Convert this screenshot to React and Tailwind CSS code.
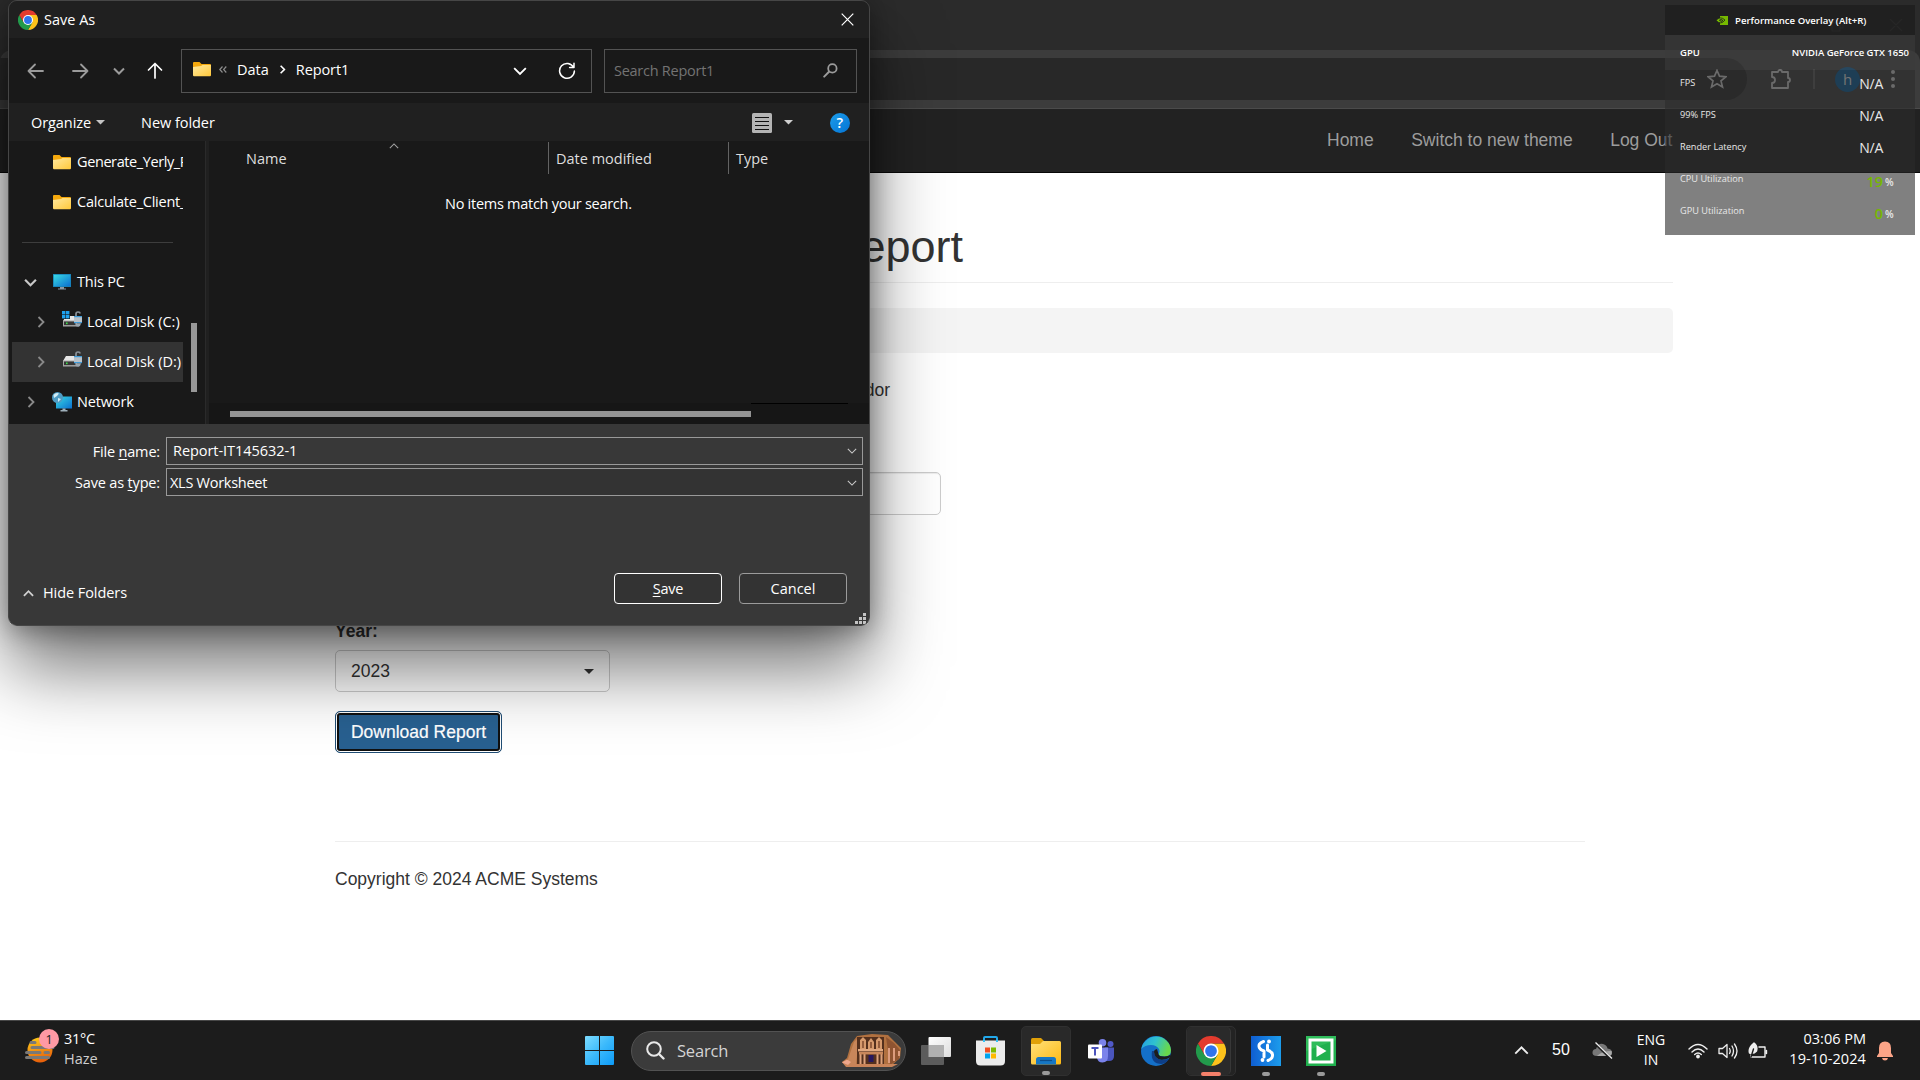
import React from 'react';

const stroke = { fill: 'none', strokeLinecap: 'round', strokeLinejoin: 'round' };

function ChromeLogo({ className }) {
  return (
    <svg viewBox="0 0 48 48" className={className}>
      <path d="M24 12 H44.8 A24 24 0 0 1 24 48 L34.4 30 Z" fill="#fcc21b" />
      <path d="M13.6 30 L3.2 12 A24 24 0 0 0 24 48 L34.4 30 Z" fill="#229a4b" />
      <path d="M24 12 H44.8 A24 24 0 0 0 3.2 12 L13.6 30 Z" fill="#e33b2e" />
      <circle cx="24" cy="24" r="12" fill="#fff" />
      <circle cx="24" cy="24" r="9.4" fill="#2f74ec" />
    </svg>
  );
}

function Folder() {
  return (
    <svg viewBox="0 0 18 15" className="h-[15px] w-[18px] shrink-0">
      <path d="M0 1 Q0 0 1 0 H6.5 L8.5 2 H17 Q18 2 18 3 V6 H0 Z" fill="#f5a80c" />
      <path d="M0 5 L8 4 L9.5 3 H18 V13 Q18 14.2 17 14.2 H1 Q0 14.2 0 13 Z" fill="url(#fold)" />
      <defs>
        <linearGradient id="fold" x1="0" y1="0" x2="1" y2="1">
          <stop offset="0" stopColor="#ffe9a0" />
          <stop offset="1" stopColor="#ffc83a" />
        </linearGradient>
      </defs>
    </svg>
  );
}

function Monitor() {
  return (
    <svg viewBox="0 0 18 16" className="h-4 w-[18px] shrink-0">
      <defs>
        <linearGradient id="mon" x1="0" y1="0" x2="1" y2="1">
          <stop offset="0" stopColor="#39dbe4" />
          <stop offset="1" stopColor="#0b6fd0" />
        </linearGradient>
      </defs>
      <rect width="18" height="13" fill="#1782b8" />
      <rect x=".8" y=".8" width="16.4" height="11.4" fill="url(#mon)" />
      <path d="M7 13 h4 v1.5 h2 V15.6 H5 V14.5 H7 Z" fill="#8b98a3" />
    </svg>
  );
}

function Disk({ system }) {
  return (
    <svg viewBox="0 0 20 17" className="h-[17px] w-5 shrink-0">
      <path d="M4 5 H15 L17 10 H1 Z" fill="#e6e6e6" />
      <rect x="1" y="9.5" width="14" height="6" fill="#a8a8a8" />
      <rect x="2" y="10.500" width="12" height="3.6" fill="#363636" />
      <rect x="4" y="11.500" width="1.6" height="1.6" fill="#3ce04a" />
      {system && (
        <g fill="#1ea0ee">
          <rect x="-.5" y="-.5" width="8.5" height="8.5" fill="#191919" />
          <rect x="0" y="0" width="3.4" height="3.4" />
          <rect x="4" y="0" width="3.4" height="3.4" />
          <rect x="0" y="4" width="3.4" height="3.4" />
          <rect x="4" y="4" width="3.4" height="3.4" />
        </g>
      )}
      <path d="M14 5 V3 Q14 1 16 1 Q18 1 18 2.6" stroke="#8a9299" strokeWidth="1.7" fill="none" />
      <rect x="12" y="5" width="8" height="7" fill="#b9c2ca" />
      <rect x="12" y="5" width="8" height="1.2" fill="#3f9ad6" />
      <rect x="12" y="11" width="8" height="1.2" fill="#3f9ad6" />
      <path d="M13 12.2 H19 L18 15 L16 16 L14 15 Z" fill="#9aa5ae" />
    </svg>
  );
}

function NetworkIcon() {
  return (
    <svg viewBox="0 0 20 20" className="h-5 w-5 shrink-0">
      <rect x="4" y="4.5" width="16" height="12" fill="url(#mon)" />
      <path d="M10.5 16.5 h3 v1.6 h2 V19.4 H8.5 V18.1 h2 Z" fill="#9fb0bb" />
      <circle cx="5.5" cy="5.5" r="5.5" fill="#4f9cc4" />
      <path d="M1.5 3 Q4 0 7 1.5 L5 4 L2 6 Z M6 6 L9 7 L6 10 Z" fill="#d3edf6" />
    </svg>
  );
}

function Chev({ dir = 'down', w = 12, color = '#fff', sw = 1.6 }) {
  const r = { down: 0, up: 180, right: -90, left: 90 }[dir];
  return (
    <svg viewBox="0 0 12 12" width={w} height={w} className="shrink-0">
      <path d="M1 3.5 L6 8.5 L11 3.5" transform={`rotate(${r} 6 6)`} stroke={color} strokeWidth={sw} fill="none" />
    </svg>
  );
}

function TreeRow({ children, className = '' }) {
  return <div className={`flex h-10 items-center overflow-hidden whitespace-nowrap ${className}`}>{children}</div>;
}

function Dialog() {
  return (
    <div className="absolute left-2 top-0 h-[626px] w-[862px] overflow-hidden rounded-[9px] border border-[#464646] bg-[#383838] font-['Open_Sans','Noto_Sans',sans-serif] text-[14.5px] leading-5 text-white">
      <div className="flex h-[37px] items-center bg-[#202020] pl-[9px] pr-[15px]">
        <ChromeLogo className="h-5 w-5" />
        <span className="ml-[6px]">Save As</span>
        <svg viewBox="0 0 13 13" className="ml-auto h-[13px] w-[13px]"><path d="M.7 .7 L12.3 12.3 M12.3 .7 L.7 12.3" stroke="#fff" strokeWidth="1.2" /></svg>
      </div>
      <div className="flex h-[65px] items-center bg-[#191919] pl-[18px]">
        <svg viewBox="0 0 17 16" className="h-4 w-[17px]" stroke="#9b9b9b" strokeWidth="1.8" {...stroke}><path d="M16 8 H1.5 M8 1.5 L1.5 8 L8 14.5" /></svg>
        <svg viewBox="0 0 17 16" className="ml-[28px] h-4 w-[17px]" stroke="#9b9b9b" strokeWidth="1.8" {...stroke}><path d="M1 8 H15.5 M9 1.5 L15.5 8 L9 14.5" /></svg>
        <span className="ml-[24px]"><Chev w={12} color="#9b9b9b" sw={2} /></span>
        <svg viewBox="0 0 16 17" className="ml-[22px] h-[17px] w-4" stroke="#fff" strokeWidth="1.7" {...stroke}><path d="M8 16 V1.5 M1.5 8 L8 1.5 L14.5 8" /></svg>
        <div className="ml-[18px] flex h-11 w-[411px] items-center border border-[#535353] pb-[2px] pl-[11px] pr-[15px]">
          <Folder />
          <svg viewBox="0 0 8 7" className="ml-[8px] h-[7px] w-2" stroke="#8c8c8c" strokeWidth="1.2" fill="none"><path d="M3.5 .5 L.8 3.5 L3.5 6.5 M7.3 .5 L4.6 3.5 L7.3 6.5" /></svg>
          <span className="ml-[10px]">Data</span>
          <span className="ml-[9px]"><Chev w={9} dir="right" sw={2.2} /></span>
          <span className="ml-[9px] tracking-[-0.1px]">Report1</span>
          <span className="ml-auto pt-[3px]"><Chev w={14} sw={1.6} /></span>
          <svg viewBox="0 0 18 18" className="ml-[31px] mt-[2px] h-[18px] w-[18px]" stroke="#fff" strokeWidth="1.5" {...stroke}><path d="M15.6 5.5 A7.4 7.4 0 1 0 16.4 9 M16 1.2 V5.6 H11.6" /></svg>
        </div>
        <div className="ml-3 flex h-11 w-[253px] items-center justify-between border border-[#535353] pl-[9px] pr-[18px] tracking-[-0.26px] text-[#737373]">
          Search Report1
          <svg viewBox="0 0 15 15" className="h-[15px] w-[15px]" stroke="#9b9b9b" {...stroke}><circle cx="9.4" cy="5.4" r="4.2" strokeWidth="1.8" /><path d="M6 8.8 L1.2 13.6" strokeWidth="2" /></svg>
        </div>
      </div>
      <div className="flex h-[38px] items-center bg-[#202020] pl-[22px] pt-px">
        <span className="tracking-[-0.07px]">Organize</span>
        <svg viewBox="0 0 9 5" className="ml-[5px] h-[5px] w-[9px]"><path d="M0 0 H9 L4.5 4.6 Z" fill="#c4c4c4" /></svg>
        <span className="ml-[36px] tracking-[-0.05px]">New folder</span>
        <svg viewBox="0 0 20 20" className="ml-[537px] h-5 w-5"><rect width="20" height="20" rx="1.5" fill="#b4b4b4" /><path d="M3 4.5 H17 M3 8.5 H17 M3 12.5 H17 M3 16.5 H17" stroke="#111" /></svg>
        <svg viewBox="0 0 9 5" className="ml-3 h-[5px] w-[9px]"><path d="M0 0 H9 L4.5 4.6 Z" fill="#d0d0d0" /></svg>
        <span className="ml-[37px] flex h-5 w-5 items-center justify-center rounded-full bg-linear-to-br from-[#1c9dea] to-[#0673d4] font-semibold">?</span>
      </div>
      <div className="flex h-[283px] bg-[#191919]">
        <div className="ml-[3px] w-[171px] overflow-hidden pt-px">
          <TreeRow className="pl-[41px]"><Folder /><span className="ml-[6px] tracking-[-0.4px]">Generate_Yerly_Report</span></TreeRow>
          <TreeRow className="pl-[41px]"><Folder /><span className="ml-[6px] tracking-[-0.23px]">Calculate_Client_Data</span></TreeRow>
          <TreeRow className="pl-[10px]"><div className="h-px w-[151px] bg-[#3d3d3d]" /></TreeRow>
          <TreeRow className="pl-[12px]"><Chev w={13} color="#c8c8c8" sw={2} /><span className="ml-4"><Monitor /></span><span className="ml-[6px] tracking-[-0.2px]">This PC</span></TreeRow>
          <TreeRow className="pl-[23px]"><Chev w={12} dir="right" color="#8a8a8a" sw={1.8} /><span className="ml-[15px] pb-[5px]"><Disk system /></span><span className="ml-[5px]">Local Disk (C:)</span></TreeRow>
          <TreeRow className="bg-[#333] pl-[23px]"><Chev w={12} dir="right" color="#8a8a8a" sw={1.8} /><span className="ml-[15px] pb-[5px]"><Disk /></span><span className="ml-[5px]">Local Disk (D:)</span></TreeRow>
          <TreeRow className="pl-[13px]"><Chev w={12} dir="right" color="#8a8a8a" sw={1.8} /><span className="ml-[15px]"><NetworkIcon /></span><span className="ml-[5px] tracking-[-0.15px]">Network</span></TreeRow>
        </div>
        <div className="w-[22px] pl-2 pt-[182px]"><div className="h-[69px] w-[6px] bg-[#989898]" /></div>
        <div className="w-1 border-l border-[#2a2a2a] bg-[#202020]" />
        <div className="flex flex-1 flex-col">
          <div className="mt-px flex h-8 text-[#dedede]">
            <div className="relative w-[339px] pl-[37px] pt-[7px]">
              Name
              <span className="absolute left-[180px] top-[-1px]"><Chev w={10} dir="up" color="#a0a0a0" sw={1.3} /></span>
            </div>
            <div className="w-[180px] border-l border-[#636363] pl-[7px] pt-[7px]">Date modified</div>
            <div className="flex-1 border-l border-[#636363] pl-[7px] pt-[7px]">Type</div>
          </div>
          <div className="mt-[20px] h-[22px] pl-[236px] tracking-[-0.27px]">No items match your search.</div>
          <div className="mt-auto h-[21px] bg-[#161616]">
            <div className="ml-[542px] h-px w-[97px] bg-black" />
            <div className="ml-[21px] mt-[7px] h-[6px] w-[521px] bg-[#949494]" />
          </div>
        </div>
      </div>
      <div className="grid grid-cols-[151px_697px] gap-x-[6px] gap-y-[3px] pt-[13px]">
        <span className="pt-[5px] text-right tracking-[-0.17px]">File <u className="underline-offset-2">n</u>ame:</span>
        <div className="flex h-7 items-center justify-between border border-[#999] pb-px pl-[6px] pr-[5px]"><span className="tracking-[-0.05px]">Report-IT145632-1</span><Chev w={10} color="#c9c9c9" sw={1.3} /></div>
        <span className="pt-[5px] text-right tracking-[-0.17px]">Save as <u className="underline-offset-2">t</u>ype:</span>
        <div className="flex h-7 items-center justify-between border border-[#999] bg-[#333] pl-[3px] pr-[5px] pt-px"><span className="tracking-[-0.27px]">XLS Worksheet</span><Chev w={10} color="#c9c9c9" sw={1.3} /></div>
      </div>
      <div className="mt-[77px] flex pl-[14px]">
        <div className="mt-[10px] flex h-5 w-[591px] items-center"><Chev w={11} dir="up" color="#d0d0d0" sw={2} /><span className="ml-[9px] tracking-[-0.07px]">Hide Folders</span></div>
        <div className="flex h-[31px] w-[108px] items-center justify-center rounded-[4px] border border-white bg-[#333] tracking-[-0.2px]"><span><u className="underline-offset-2">S</u>ave</span></div>
        <div className="ml-[17px] flex h-[31px] w-[108px] items-center justify-center rounded-[4px] border border-[#9b9b9b] bg-[#333]">Cancel</div>
      </div>
      <svg viewBox="0 0 11 11" className="ml-auto mr-[3px] mt-[9px] h-[11px] w-[11px]" fill="#c4c4c4">
        {[[8, 0], [4, 4], [8, 4], [0, 8], [4, 8], [8, 8]].map(([x, y]) => <rect key={`${x}${y}`} x={x} y={y} width="3" height="3" />)}
      </svg>
    </div>
  );
}

function DialogShadow() {
  return <div className="absolute left-2 top-0 h-[626px] w-[862px] rounded-[9px] shadow-[0_42px_72px_rgba(0,0,0,0.54),0_4px_26px_rgba(0,0,0,0.36)]" />;
}

function Browser() {
  return (
    <div className="h-[1020px] overflow-hidden bg-white">
      <div className="bg-[#2b2b2b]">
        <div className="flex h-[50px] items-center justify-end pr-[17px]">
          <svg viewBox="0 0 72 13" className="h-[13px] w-[72px]" stroke="#858585" strokeWidth="1.2" fill="none"><path d="M1 4 h8 v8 h-8 Z M3 4 V1 h9 v8 h-3 M59 0 L71 12 M71 0 L59 12" /></svg>
        </div>
        <div className="flex h-[59px] items-center rounded-t-[12px] border-b border-[#4b4b4b] bg-[#3c3c3c]">
          <div className="flex h-[42px] w-[1747px] items-center justify-end rounded-r-full bg-[#282828] pr-[20px]">
            <svg viewBox="0 0 20 20" className="h-5 w-5" stroke="#c7c7c7" strokeWidth="1.7" fill="none"><path d="M10 1.5 L12.5 7.2 L18.8 7.8 L14 11.9 L15.5 18 L10 14.7 L4.5 18 L6 11.9 L1.2 7.8 L7.5 7.2 Z" /></svg>
          </div>
          <svg viewBox="0 0 22 22" className="ml-[23px] h-[22px] w-[22px]" stroke="#c7c7c7" strokeWidth="1.8" fill="none" strokeLinejoin="round"><path d="M2 4 H8 A2 2 0 0 1 12 4 H18 V10 A2 2 0 0 1 18 14 V20 H2 V15 A3 3 0 0 0 2 9 Z" /></svg>
          <div className="ml-[21px] h-5 w-[2px] bg-[#5a5a5a]" />
          <div className="ml-[20px] flex h-[25px] w-[25px] items-center justify-center rounded-full bg-[#0b5a94] font-['Open_Sans',sans-serif] text-[15px] text-[#ddd]">h</div>
          <svg viewBox="0 0 4 18" className="ml-[31px] h-[18px] w-1" fill="#c7c7c7"><circle cx="2" cy="2" r="2" /><circle cx="2" cy="9" r="2" /><circle cx="2" cy="16" r="2" /></svg>
        </div>
      </div>
      <nav className="flex h-16 items-center gap-[37.5px] border-b border-[#080808] bg-[#222] pl-[1327px] text-[17.5px] text-[#9d9d9d]">
        <span>Home</span><span>Switch to new theme</span><span>Log Out</span>
      </nav>
      <main className="ml-[335px] text-[17.5px] leading-[25px] text-[#333]">
        <div className="flex h-[110px] w-[1338px] items-end border-b border-[#eee] pb-[10px]">
          <h1 className="w-[628px] text-right text-[45px] leading-[50px]">Client Report</h1>
        </div>
        <div className="mt-[25px] h-[45px] w-[1338px] rounded-[5px] bg-[#f4f4f4]" />
        <div className="mt-[25px] w-[555px] text-right">Vendor</div>
        <div className="mt-[69px] h-[43px] w-[606px] rounded-[5px] border border-[#ccc] shadow-[inset_0_1px_1px_rgba(0,0,0,0.075)]" />
        <div className="mt-[104px] font-bold">Year:</div>
        <div className="mt-[6px] flex h-[42px] w-[275px] items-center justify-between rounded-[5px] border border-[#ccc] pl-[15px] pr-[15px]">
          2023
          <svg viewBox="0 0 10 5" className="h-[5px] w-[10px]"><path d="M0 0 H10 L5 5 Z" fill="#333" /></svg>
        </div>
        <button className="mt-[19px] flex h-[42px] w-[167px] items-center justify-center rounded-[5px] border border-[#204d74] bg-[#286090] text-white shadow-[inset_0_0_0_1px_#fff,inset_0_0_0_3px_#101010] [-webkit-text-stroke:0.2px_#fff]">Download Report</button>
        <div className="mt-[88px] h-px w-[1250px] bg-[#eee]" />
        <div className="mt-[25px]">Copyright © 2024 ACME Systems</div>
      </main>
    </div>
  );
}

function PerfRow({ label, children }) {
  return (
    <div className="flex h-8 items-center">
      <span className="w-[171px] pb-[3px] text-[9.2px] font-medium">{label}</span>
      {children}
    </div>
  );
}

function Perf() {
  const na = <span className="w-[32px] text-right text-[14px] font-medium tracking-[-0.3px]">N/A</span>;
  return (
    <div className="absolute left-[1665px] top-[5px] h-[230px] w-[250px] font-['Open_Sans','Noto_Sans',sans-serif] font-semibold leading-4 text-[#e8e8e8]">
      <div className="flex h-[30px] items-center bg-[#1f1f1fee] pl-[51px] pt-px">
        <svg viewBox="0 0 12 9" className="h-[9px] w-3"><path d="M4 0 H12 V9 H4 Z" fill="#76b900" /><path d="M0 4.5 Q4 -.5 9 4 Q5 9.5 0 4.5 Z" fill="#76b900" stroke="#1f1f1f" strokeWidth=".8" /><path d="M3 4.5 Q5 2.5 7 4.5 Q5 6.5 4 4.5" fill="none" stroke="#1f1f1f" strokeWidth=".9" /></svg>
        <span className="ml-[7px] text-[9.6px] text-white">Performance Overlay (Alt+R)</span>
      </div>
      <div className="flex h-[35px] items-center justify-between bg-[#3a3a3a99] pl-[15px] pr-[6px] text-[9.5px] text-white"><span>GPU</span><span>NVIDIA GeForce GTX 1650</span></div>
      <div className="h-[165px] bg-[#2b2b2b99] pl-[15px]">
        <div className="-translate-y-[2px]">
          <PerfRow label="FPS">{na}</PerfRow>
          <PerfRow label="99% FPS">{na}</PerfRow>
          <PerfRow label="Render Latency">{na}</PerfRow>
          <PerfRow label="CPU Utilization"><span className="w-[32px] pt-[3px] text-right text-[14.5px] text-[#76b900]">19</span><span className="ml-[2px] pt-1 text-[10px]">%</span></PerfRow>
          <PerfRow label="GPU Utilization"><span className="w-[32px] pt-[3px] text-right text-[14.5px] text-[#76b900]">0</span><span className="ml-[2px] pt-1 text-[10px]">%</span></PerfRow>
        </div>
      </div>
    </div>
  );
}

function Petra() {
  return (
    <svg viewBox="0 0 60 33" className="h-[33px] w-[60px]">
      <path d="M0 28 L5 24 L9 10 L15 2 L30 0 L46 1 L53 8 L59 14 L58 24 L50 31 L38 32 H4 Z" fill="#b0703f" />
      <path d="M6 25 L12 8 L17 3 L14 31 H5 Z" fill="#c8865a" />
      <path d="M44 3 L52 9 L58 16 L57 25 L48 31 Z" fill="#8f5431" />
      <path d="M47 14 V29 M52 14 V27 M57 17 V22" stroke="#dc9c7d" strokeWidth="2" />
      <rect x="15" y="3" width="27" height="28" fill="#54301d" />
      <path d="M18 6 l3 -3 l3 3 v9 h-6 Z M34 6 l3 -3 l3 3 v9 h-6 Z M26 8 l3 -4 l3 4 v7 h-6 Z" fill="#d69a6d" />
      <rect x="16" y="15" width="25" height="2.4" fill="#e0a880" />
      <path d="M18.5 20 V31 M22.5 20 V31 M35.5 20 V31 M39.5 20 V31" stroke="#dda27c" strokeWidth="2" />
      <rect x="17" y="18" width="24" height="2.4" fill="#c8875b" />
      <rect x="26.5" y="21" width="5" height="7" fill="#27185e" />
      <path d="M0 28 L5 26 L8 30 H56 L50 33 H4 Z" fill="#c98459" />
      <path d="M0 28.5 L5 25.5 L9 28 L6 31 Z" fill="#eea78c" />
      <path d="M21 7 V14 M37 7 V14 M29 8 V14" stroke="#79452a" strokeWidth="1.4" />
    </svg>
  );
}

function AppIcon({ children, running, active }) {
  return (
    <div className={`relative flex h-[50px] w-[50px] items-center justify-center rounded-[5px] ${active ? 'border border-[#303030] bg-[#292929]' : ''}`}>
      {children}
      {running && <span className="absolute bottom-0 h-[4px] w-2 rounded-full bg-[#9a9a9a]" />}
    </div>
  );
}

function Taskbar() {
  const i = 'h-[30px] w-[30px]';
  return (
    <div className="relative flex h-[60px] items-center border-t border-[#474747] bg-[#1c1c1c] font-['Open_Sans','Noto_Sans',sans-serif] text-[14.5px] leading-5 text-white">
      <div className="flex w-[585px] items-center pl-[25px]">
        <svg viewBox="0 0 36 36" className="mb-[10px] h-9 w-9">
          <defs><linearGradient id="sun" x1="0" y1="0" x2="0.3" y2="1"><stop offset="0" stopColor="#ffd21a" /><stop offset="1" stopColor="#e8620b" /></linearGradient></defs>
          <circle cx="15" cy="22" r="12.5" fill="url(#sun)" />
          <path d="M6 14.5 H10 M7 19.5 H28 M1.5 24.5 H15 M20 24.5 H23.5 M1.5 29.5 H23.5" stroke="#7b7977" strokeWidth="3" strokeLinecap="round" />
          <circle cx="24" cy="11" r="10" fill="#ff99a4" />
          <text x="24" y="15.5" textAnchor="middle" fontSize="12.5" fill="#222">1</text>
        </svg>
        <div className="mb-[11px] ml-[3px] mt-[8px]"><div className="tracking-[-0.3px]">31°C</div><div className="text-[#cfcfcf]">Haze</div></div>
      </div>
      <svg viewBox="0 0 29 29" className="h-[29px] w-[29px]">
        <defs><linearGradient id="win" x1="0" y1="0" x2="1" y2="1"><stop offset="0" stopColor="#7ddcff" /><stop offset=".5" stopColor="#3bb9fb" /><stop offset="1" stopColor="#0d9bf8" /></linearGradient></defs>
        <path d="M0 1 Q0 0 1 0 H14 V14 H0 Z M15 0 H28 Q29 0 29 1 V14 H15 Z M0 15 H14 V29 H1 Q0 29 0 28 Z M15 15 H29 V28 Q29 29 28 29 H15 Z" fill="url(#win)" />
      </svg>
      <div className="ml-[17px] flex h-10 w-[275px] items-center rounded-full border border-[#525252] bg-[#3b3b3b] pl-[14px] pr-[3px] text-[16.5px]">
        <svg viewBox="0 0 19 19" className="h-[19px] w-[19px]" stroke="#e8e8e8" strokeWidth="2" {...stroke}><circle cx="8" cy="8" r="6.8" /><path d="M13 13 L17.5 17.5" strokeWidth="2.4" /></svg>
        <span className="ml-[12px] tracking-[-0.2px] text-[#d4d4d4]">Search</span>
        <span className="ml-auto"><Petra /></span>
      </div>
      <div className="ml-[5px] flex gap-[5px]">
        <AppIcon>
          <svg viewBox="0 0 30 28" className="h-7 w-[30px]"><defs><linearGradient id="tv" x1="0" y1="0" x2="1" y2="1"><stop offset="0" stopColor="#fff" /><stop offset="1" stopColor="#dcdcdc" /></linearGradient></defs><rect x="7.5" width="22.5" height="20" rx="1" fill="url(#tv)" /><rect y="8" width="23" height="20" rx="1" fill="#5c5c5c" /><path d="M7.5 8 H23 V20 H7.5 Z" fill="#b0b0b0" /></svg>
        </AppIcon>
        <AppIcon>
          <svg viewBox="0 0 30 30" className={i}><path d="M8 5 V2 Q8 1 9 1 H20 Q21 1 21 2 V5" stroke="#22a8ea" strokeWidth="2" fill="none" /><path d="M0 4.5 H29 V25 Q29 29.5 24.5 29.5 H4.5 Q0 29.5 0 25 Z" fill="#ececec" /><path d="M8 4 V6 M21 4 V6" stroke="#36c3f5" strokeWidth="2" /><rect x="9" y="11.5" width="5" height="5" fill="#f25022" /><rect x="15" y="11.5" width="5" height="5" fill="#7fba00" /><rect x="9" y="17.5" width="5" height="5" fill="#00a4ef" /><rect x="15" y="17.5" width="5" height="5" fill="#ffb900" /></svg>
        </AppIcon>
        <AppIcon running active>
          <svg viewBox="0 0 30 30" className={i}><defs><linearGradient id="fe" x1="0" y1="0" x2="1" y2="1"><stop offset="0" stopColor="#ffe07a" /><stop offset="1" stopColor="#fdb913" /></linearGradient></defs><path d="M0 4 Q0 2 1.5 2 H10 L13 5 V9 H0 Z" fill="#e0a008" /><path d="M0 8 H9 L12 5 H28.5 Q30 5 30 6.5 V27 Q30 28.5 28.5 28.5 H1.5 Q0 28.5 0 27 Z" fill="url(#fe)" /><path d="M5 28.5 V23.5 Q5 21 7.5 21 H22.5 Q25 21 25 23.5 V28.5 Z" fill="#1677c4" /><path d="M9 24.5 H21" stroke="#0c4e8c" strokeWidth="1.2" /></svg>
        </AppIcon>
        <AppIcon>
          <svg viewBox="0 0 30 30" className={i}><circle cx="24.500" cy="8" r="3" fill="#5059c9" /><path d="M19 11.5 H28 V20 Q28 25 23 25 H19 Z" fill="#4a55bd" /><circle cx="16.500" cy="6.8" r="3.8" fill="#7b83eb" /><path d="M10 11.5 H22 V20 Q22 26.5 16.5 26.5 Q12 26.5 11 22 Z" fill="#7b83eb" /><rect x="2" y="8.5" width="14" height="14" rx="1" fill="#fff" /><path d="M5.5 12 H12.5 M9 12 V19.5" stroke="#4b53bc" strokeWidth="2" /></svg>
        </AppIcon>
        <AppIcon>
          <svg viewBox="0 0 30 30" className={i}>
            <defs><linearGradient id="ed" x1="0" y1="0" x2="1" y2="0.3"><stop offset="0" stopColor="#239de2" /><stop offset=".5" stopColor="#2fc2d0" /><stop offset="1" stopColor="#68d84c" /></linearGradient></defs>
            <circle cx="15" cy="15" r="15" fill="#1470c8" />
            <path d="M.3 13 A15 15 0 0 1 30 14 Q30 20.5 23.5 20.5 Q18 20.5 17.5 18 Q19.5 15.5 17.8 12.8 Q15.5 9 10 9 Q4 9 .3 13 Z" fill="url(#ed)" />
            <path d="M11 15 Q9 28 21 28 Q25.5 27 28 22.5 Q24 24.8 19 23.5 Q12.5 21.5 13 15 Z" fill="#0e3f88" />
            <path d="M13 16 Q13.5 23 20.5 23.8 Q25 24 28.5 21.8 L30 18.5 Q27 20.5 23.5 20.5 Q17.5 20.5 17.5 18 L16 13 Q13 13.5 13 16 Z" fill="#1c1c1c" />
          </svg>
        </AppIcon>
        <div className="relative flex h-[50px] w-[50px] rounded-[5px] border border-[#303030] bg-[#232323]">
          <div className="flex h-full w-[44px] items-center justify-end rounded-[5px] border-r border-[#383838] bg-[#2a2a2a] pr-[4px]"><ChromeLogo className={i} /></div>
          <span className="absolute bottom-[-1px] left-[14px] h-1 w-5 rounded-full bg-[#f4806a]" />
        </div>
        <AppIcon running>
          <svg viewBox="0 0 30 30" className={i}><defs><linearGradient id="bs" x1="0" y1="0" x2="1" y2="0"><stop offset="0" stopColor="#0f5ed2" /><stop offset="1" stopColor="#1c9cec" /></linearGradient></defs><rect width="30" height="30" fill="url(#bs)" /><path d="M12.500 5.500 Q6.500 7.500 8.500 12 Q9.500 14 13 15 V21 M16.500 9 V14 Q21 15.500 21.500 18.500 Q22 22.500 17 24.500" stroke="#fff" strokeWidth="3" {...stroke} /><circle cx="18" cy="5.5" r="1.9" fill="#fff" /><circle cx="11.5" cy="24" r="1.9" fill="#fff" /></svg>
        </AppIcon>
        <AppIcon running>
          <svg viewBox="0 0 30 30" className={i}><rect width="30" height="30" fill="#2fbd5b" /><path d="M0 15 L30 4 V30 H0 Z" fill="#20b04e" /><rect x="4" y="4" width="22" height="22" fill="none" stroke="#fff" strokeWidth="3" /><path d="M10.5 9 L20.5 15 L10.5 21 Z" fill="#fff" /></svg>
        </AppIcon>
      </div>
      <div className="ml-auto flex items-center pr-[27px]">
        <Chev w={15} dir="up" color="#eee" sw={1.5} />
        <span className="ml-[22px] w-[20px] pb-px text-center font-['Liberation_Sans',sans-serif] text-[16px]">50</span>
        <svg viewBox="0 0 21 17" className="ml-[21px] h-[17px] w-[21px]"><path d="M5 14 Q0 14 .5 10 Q1 7 4 7 Q6 1 11 2 Q15 3 15.5 6.5 Q20 7 20 10.5 Q20 14 16 14 Z" fill="#777" /><path d="M5 14 Q10 9 19.5 9 Q21 14 16 14 Z" fill="#a9a9a9" /><path d="M2.5 .5 L19 16.5" stroke="#1c1c1c" strokeWidth="3" /><path d="M3.5 .5 L20 16.5" stroke="#eee" strokeWidth="1.3" /></svg>
        <div className="ml-[21px] w-[34px] pb-px text-center text-[14px]"><div>ENG</div><div>IN</div></div>
        <svg viewBox="0 0 20 16" className="ml-[20px] h-4 w-5" stroke="#eee" strokeWidth="1.4" {...stroke}><path d="M1 6 Q10 -3 19 6 M4 9 Q10 3 16 9 M6.7 11.6 Q10 8.5 13.3 11.6" /><circle cx="10" cy="13.5" r="1.2" fill="#eee" /></svg>
        <svg viewBox="0 0 20 18" className="ml-[10px] h-[18px] w-5" stroke="#eee" strokeWidth="1.3" {...stroke}><path d="M1 6.5 H4.5 L9 2.5 V15.5 L4.5 11.5 H1 Z M11.5 6.5 Q13 9 11.5 11.5 M14 4 Q17 9 14 14 M16.5 2 Q21.5 9 16.5 16" /></svg>
        <svg viewBox="0 0 21 18" className="ml-[10px] h-[18px] w-[21px]" stroke="#eee" strokeWidth="1.4" {...stroke}><path d="M11 5 H17 V15 H3 V13 M18.5 8.5 V11.5" /><path d="M6 1 Q0 6 1.5 11 Q6 12 8.5 9 Q10 4 6 1 Z" fill="#eee" /><path d="M5.5 7 L3 15" stroke="#1c1c1c" /></svg>
        <div className="mb-[4px] ml-[18px] w-[79px] text-right text-[14.5px]"><div>03:06 PM</div><div className="tracking-[0.1px]">19-10-2024</div></div>
        <svg viewBox="0 0 16 20" className="ml-[11px] h-5 w-4" fill="#fba487"><path d="M8 .5 Q14 .5 14 7 V12 L16 15 V16 H0 V15 L2 12 V7 Q2 .5 8 .5 Z M5 17 H11 Q10.5 19.5 8 19.5 Q5.5 19.5 5 17 Z" /></svg>
      </div>
    </div>
  );
}

export default function App() {
  return (
    <div className="relative h-[1080px] w-[1920px] overflow-hidden bg-white font-['Liberation_Sans',sans-serif]">
      <Browser />
      <DialogShadow />
      <Dialog />
      <Perf />
      <Taskbar />
    </div>
  );
}
